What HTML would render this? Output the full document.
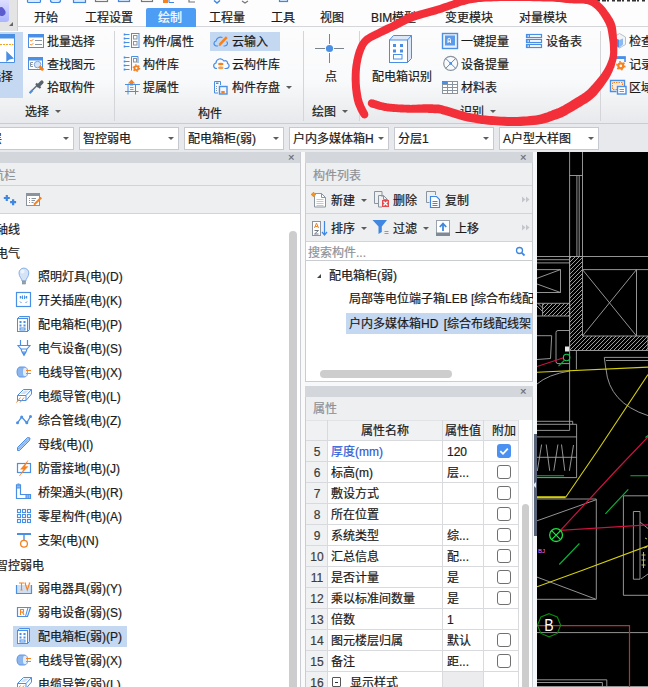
<!DOCTYPE html>
<html lang="zh-CN">
<head>
<meta charset="utf-8">
<title>UI</title>
<style>
*{box-sizing:border-box;margin:0;padding:0}
html,body{width:648px;height:687px;overflow:hidden}
body{position:relative;background:#e8e9ec;font-family:"Liberation Sans",sans-serif;font-size:12px;color:#1a1a1a;line-height:14px;-webkit-text-stroke:.2px}
.a{position:absolute}
.t{position:absolute;white-space:nowrap;height:14px;line-height:14px;margin-top:1px}
/* ribbon */
#ribbon{left:0;top:0;width:648px;height:124px;background:#f6f7f8}
#tabs{left:0;top:0;width:648px;height:27px;background:#fdfdfd}
#rbody{left:0;top:26px;width:648px;height:98px;background:linear-gradient(#fcfcfd 0,#f9fafb 55%,#e7e9ec 100%);border-top:1px solid #d4d6da;border-bottom:1px solid #c9ccd1}
.vsep{position:absolute;width:1px;top:31px;height:90px;background:#d3d5d9}
.tab{position:absolute;top:11px;font-size:12px;white-space:nowrap}
.hl{position:absolute;background:#c5d8f1}
.dd{position:absolute;top:127px;height:23px;background:#fff;border:1px solid #c6c9cf}
.dd span{position:absolute;left:3px;top:4px;white-space:nowrap}
.dd i{position:absolute;right:4px;top:9px;width:0;height:0;border:3px solid transparent;border-top:3.5px solid #5c5c5c;border-bottom:0}
.arr{position:absolute;width:0;height:0;border:3px solid transparent;border-top:3.5px solid #5c5c5c;border-bottom:0}
/* panels */
.phead{position:absolute;height:11px;background:#d3d6db}
.ptitle{position:absolute;height:23px;background:#eeeff1;border-bottom:1px solid #d2d4d8;color:#8e9196}
.ptool{position:absolute;height:28px;background:#eeeff1;border-bottom:1px solid #d2d4d8}
.x{position:absolute;font-size:11px;color:#666;line-height:11px}
.row{position:absolute;left:38px;white-space:nowrap;height:14px;line-height:14px}
.ico{position:absolute;left:16px;width:16px;height:16px}
.cb{position:absolute;left:497px;width:14px;height:14px;border:1px solid #707070;border-radius:3px;background:#fff}
.pr{position:absolute;left:306px;width:212px;height:21px;border-bottom:1px solid #d9dadd}
.pr b{position:absolute;left:0;top:0;width:22px;height:20px;background:#f0f1f3;font-weight:normal;text-align:center;line-height:22px;color:#3c3c3c}
.pr em{position:absolute;left:26px;top:5px;width:9px;height:10px;border:1px solid #555;border-radius:1px}
.pr em:after{content:"";position:absolute;left:2px;top:3.5px;width:3px;height:1px;background:#333}
.pr u{position:absolute;left:25px;top:4px;text-decoration:none;white-space:nowrap}
.pr s{position:absolute;left:141px;top:4px;text-decoration:none;white-space:nowrap}
</style>
</head>
<body>
<!-- RIBBON -->
<div id="ribbon" class="a">
 <div id="tabs" class="a"></div>
 <div id="rbody" class="a"></div>
</div>
<!-- app icon -->
<div class="a" style="left:0;top:0;width:18px;height:31px;background:#e4e4e5;border-right:1px solid #cfcfd1"></div>
<div class="a" style="left:0;top:0;width:9px;height:22px;background:linear-gradient(#dedeff,#aab4ff);border-radius:0 0 3px 0"></div>
<div class="a" style="left:-2px;top:7px;width:7px;height:9px;background:#5d5ccf;border-radius:4px;transform:rotate(-30deg)"></div>
<div class="a" style="left:9px;top:22px;width:0;height:0;border:2px solid transparent;border-right-color:#666;border-bottom-color:#666"></div>
<svg class="a" style="left:0;top:0" width="648" height="8" viewBox="0 0 648 8"><g fill="#dcebfb" stroke="#3f87e0" stroke-width="1.2">
<rect x="27.5" y="-3" width="13" height="5.5" rx="1"/><path d="M50.5 -2 V0.500 Q50.5 2.500 53 2.500 H58 Q60.5 2.500 60.5 0.500 V-2"/><rect x="73.500" y="-3" width="12" height="5.500"/>
<rect x="118.500" y="-3" width="11" height="4.500"/><rect x="279.500" y="-3" width="8" height="4.500"/></g>
<g fill="none" stroke="#777" stroke-width="1.2"><rect x="95.500" y="-3" width="12" height="4.500"/><rect x="141.500" y="-3" width="11" height="4.500"/><path d="M189 -1 V2 H195 M242 1 l3 2 l3 -2"/></g>
<rect x="163" y="0" width="5" height="3" fill="#f5821f"/><path d="M169 -1 V2.500 H174" stroke="#3f87e0" fill="none"/><path d="M214 0.500 l3 2.500 l3 -2.500" stroke="#3f87e0" fill="none" stroke-width="1.500"/>
<path d="M597 0.500 H646" stroke="#333" stroke-width="2" stroke-dasharray="3 2 4 1 2 3"/></svg>
<!-- tabs -->
<div class="a" style="left:146px;top:8px;width:50px;height:19px;background:#4d9df5;border-radius:2px 2px 0 0"></div>
<span class="tab" style="left:34px">开始</span>
<span class="tab" style="left:85px">工程设置</span>
<span class="tab" style="left:158px;color:#fff">绘制</span>
<span class="tab" style="left:209px">工程量</span>
<span class="tab" style="left:271px">工具</span>
<span class="tab" style="left:320px">视图</span>
<span class="tab" style="left:371px">BIM模型</span>
<span class="tab" style="left:445px">变更模块</span>
<span class="tab" style="left:519px">对量模块</span>

<!-- ribbon group 选择 -->
<div class="hl" style="left:0;top:32px;width:23px;height:66px"></div>
<span class="t" style="left:-11px;top:69px">选择</span>
<span class="t" style="left:47px;top:34px">批量选择</span>
<span class="t" style="left:47px;top:57px">查找图元</span>
<span class="t" style="left:47px;top:80px">拾取构件</span>
<span class="t" style="left:25px;top:104px">选择</span><i class="arr" style="left:55px;top:110px"></i>
<div class="vsep" style="left:114px"></div>
<!-- group 构件 -->
<span class="t" style="left:143px;top:34px">构件/属性</span>
<span class="t" style="left:143px;top:57px">构件库</span>
<span class="t" style="left:143px;top:80px">提属性</span>
<div class="hl" style="left:210px;top:32px;width:70px;height:19px"></div>
<span class="t" style="left:232px;top:34px">云输入</span>
<span class="t" style="left:232px;top:57px">云构件库</span>
<span class="t" style="left:232px;top:80px">构件存盘</span><i class="arr" style="left:286px;top:86px"></i>
<span class="t" style="left:198px;top:106px">构件</span>
<div class="vsep" style="left:303px"></div>
<!-- group 绘图 -->
<span class="t" style="left:325px;top:69px">点</span>
<span class="t" style="left:312px;top:104px">绘图</span><i class="arr" style="left:342px;top:110px"></i>
<div class="vsep" style="left:359px"></div>
<!-- group 识别 -->
<span class="t" style="left:372px;top:69px">配电箱识别</span>
<span class="t" style="left:461px;top:34px">一键提量</span>
<span class="t" style="left:461px;top:57px">设备提量</span>
<span class="t" style="left:461px;top:80px">材料表</span>
<span class="t" style="left:546px;top:34px">设备表</span>
<span class="t" style="left:460px;top:104px">识别</span><i class="arr" style="left:490px;top:110px"></i>
<div class="vsep" style="left:600px"></div>
<span class="t" style="left:629px;top:34px">检查</span>
<span class="t" style="left:629px;top:57px">记录</span>
<span class="t" style="left:629px;top:80px">区域</span>


<!-- ribbon icons -->
<svg class="a" style="left:0;top:0" width="648" height="125" viewBox="0 0 648 125">
<g fill="none" stroke-width="1">
<!-- select big -->
<rect x="-2" y="34" width="17" height="28.5" fill="#fff" stroke="none"/>
<rect x="-2" y="34" width="17" height="4.5" fill="#4a8fe6" stroke="none"/>
<path d="M14.5 38 V62.5 H-1" stroke="#4a8fe6"/>
<path d="M0 44.5 H13.5" stroke="#f5a21f" stroke-dasharray="2 1"/>
<path d="M6.3 51 L14 58.4 L9.5 59.6 L6.3 62 Z" fill="#4a8fe6" stroke="none"/>
<!-- batch select -->
<rect x="28.5" y="34.5" width="15" height="13" fill="#fff" stroke="#4a8fe6"/>
<rect x="28" y="34" width="16" height="3.5" fill="#4a8fe6" stroke="none"/>
<path d="M30.3 40 l1 1.2 l2 -2 M30.3 44 l1 1.2 l2 -2" stroke="#f5821f"/>
<path d="M35 40.5 H42 M35 44.5 H42" stroke="#8a949e"/>
<!-- find -->
<rect x="28.5" y="57.5" width="14" height="12" fill="#fff" stroke="#4a8fe6"/>
<rect x="28" y="57" width="15" height="3.5" fill="#4a8fe6" stroke="none"/>
<path d="M33 62.5 H30.5 V66.5 H33 M30.5 64.5 H32.5" stroke="#8a949e"/>
<circle cx="37.6" cy="64.6" r="3.3" fill="#d6e4f7" stroke="#7da2e0"/>
<path d="M40.3 67.2 L42.3 69.2" stroke="#f5821f" stroke-width="3" stroke-linecap="round"/>
<!-- eyedropper -->
<path d="M30 92.5 L37.5 85" stroke="#68727c" stroke-width="1.6"/>
<path d="M29.6 93.2 L32.5 90.2" stroke="#4a8fe6" stroke-width="2"/>
<path d="M36 83.5 L40.5 88" stroke="#59636d" stroke-width="2.2"/>
<path d="M38.3 85.7 L41.8 82.2" stroke="#59636d" stroke-width="3.6" stroke-linecap="round"/>
<!-- component/attr -->
<g stroke="#4a8fe6">
<path d="M125 34.5 H129.5 M125 38.5 H129.5 M125 42.5 H129.5 M125 46.5 H129.5"/>
<path d="M124.5 33.5 v2 M124.5 37.5 v2 M124.5 41.5 v2 M124.5 45.5 v2" stroke-width="1.6"/>
<rect x="131.5" y="33.5" width="7.5" height="14"/>
<path d="M125 57.5 H129.5 M125 61.5 H129.5 M125 65.5 H129.5 M125 69.5 H129.5"/>
<path d="M124.5 56.5 v2 M124.5 60.5 v2 M124.5 64.5 v2 M124.5 68.5 v2" stroke-width="1.6"/>
<path d="M131.5 70.5 V56.5 H138 V63"/>
</g>
<rect x="133.5" y="35.5" width="3.5" height="3.5" stroke="#8a949e"/>
<rect x="133.5" y="41.5" width="3.5" height="3.5" stroke="#8a949e"/>
<rect x="133.5" y="58.5" width="3" height="3.5" stroke="#8a949e"/>
<circle cx="136.4" cy="68.1" r="2" stroke="#f5821f" stroke-width="1.9"/>
<circle cx="136.4" cy="68.1" r="3.2" stroke="#f5821f" stroke-width="1.4" stroke-dasharray="1.4 1.95"/>
<!-- extract attr -->
<path d="M131.5 79.5 L135.2 83.5 H133 V85.5 H130 V83.5 H127.8 Z" fill="#f5821f" stroke="none"/>
<path d="M128 84 V94.5 M135.5 84 V94.5 M125 84.5 H140 M125 91.5 H138.5" stroke="#4a8fe6"/>
<path d="M130 87.5 H133.5 M130 89.5 H133.5" stroke="#f5821f"/>
<!-- cloud input -->
<path d="M222.5 37.5 C219.5 36.5 216.5 38 216 41 C213.5 41.5 213 45.5 216.5 46 H218 M223.5 46 H225 C228 45.5 228 42.5 226.5 41.5" stroke="#4a8fe6" stroke-width="1.2"/>
<path d="M219.5 44.8 L226.8 37.2" stroke="#f5821f" stroke-width="2.6"/>
<path d="M218.6 46 L220.5 45.4 L219.2 44.2 Z" fill="#f5821f" stroke="none"/>
<!-- cloud lib -->
<path d="M217 68.5 C213 68.5 212.5 64 216 63 C216 59 221.5 57 224 61 C226 60 228 62 227.5 63.5 C230 64.5 229.5 68.5 226 68.5 H224.5" stroke="#4a8fe6" stroke-width="1.2"/>
<ellipse cx="220.8" cy="64" rx="2.8" ry="1.3" fill="#f5821f" stroke="none"/>
<ellipse cx="220.8" cy="67.8" rx="2.8" ry="1.5" fill="#f5a04f" stroke="none"/>
<!-- save -->
<path d="M220.5 85 V81.5 H214.5 V93 H218" stroke="#4a8fe6"/>
<rect x="216" y="82.5" width="2.5" height="1.5" fill="#4a8fe6" stroke="none"/>
<path d="M216.5 86 v1 M216.5 88 v1 M216.5 90 v1" stroke="#8a949e"/>
<rect x="219.5" y="86.5" width="7.5" height="7.5" stroke="#4a8fe6" stroke-width="1.4"/>
<rect x="221.3" y="91" width="3.4" height="2.6" fill="#f5821f" stroke="none"/>
<!-- point -->
<path d="M315 48.5 H325 M334 48.5 H344 M329.5 34 V44 M329.5 53 V63" stroke="#7a848f"/>
<circle cx="329.5" cy="48.5" r="3.6" fill="#4a8fe6" stroke="none"/>
<!-- box recognise -->
<path d="M389.5 40 L393.5 35.5 H411.5 V58.5 L407.5 62.5" fill="#dce8f8" stroke="#4a8fe6"/>
<rect x="389.5" y="40" width="18" height="22.5" fill="#fff" stroke="#4a8fe6"/>
<path d="M407.5 40 L411.5 35.5" stroke="#4a8fe6"/>
<g fill="#4a8fe6" stroke="none"><rect x="393" y="44" width="3" height="3"/><rect x="400" y="44" width="3" height="3"/><rect x="393" y="49.5" width="3" height="3"/><rect x="400" y="49.5" width="3" height="3"/></g>
<rect x="393.5" y="54.5" width="8.5" height="4.5" stroke="#4a8fe6"/>
<!-- one key -->
<rect x="442.5" y="33.5" width="15" height="15" fill="#eaf2fc" stroke="#4a8fe6" stroke-width="1.4"/>
<rect x="445" y="35.5" width="10" height="10" fill="#5b9bea" stroke="none"/>
<path d="M448 43 V39.5 Q448 38.300 449.200 38.300 Q450.400 38.300 450.400 39.5 V43 M448 41.300 H450.4" stroke="#fff"/>
<!-- device qty -->
<circle cx="450.7" cy="63.4" r="7" stroke="#8a949e" stroke-width="1.2"/>
<path d="M445.800 58.5 L455.600 68.300 M455.600 58.5 L445.800 68.3" stroke="#4a8fe6"/>
<rect x="449.4" y="62.1" width="2.6" height="2.6" fill="#4a8fe6" stroke="none"/>
<!-- material table -->
<rect x="442.5" y="81.5" width="15" height="12" fill="#fff" stroke="#8a949e"/>
<path d="M442.5 84.5 H457.5 M442.5 87.5 H457.5 M442.5 90.5 H457.5 M447.5 81.5 V93.5 M452.5 81.5 V93.5" stroke="#8a949e"/>
<rect x="442" y="81" width="5.5" height="3" fill="#4a8fe6" stroke="none"/>
<!-- device table -->
<g stroke="#4a8fe6" fill="#fff" stroke-width="1.2"><rect x="526.5" y="34.5" width="15" height="3"/><rect x="526.5" y="39.5" width="15" height="3"/><rect x="526.5" y="44.5" width="15" height="3"/></g>
<g fill="#4a8fe6" stroke="none"><rect x="526" y="34" width="4" height="4"/><rect x="526" y="39" width="4" height="4"/><rect x="526" y="44" width="4" height="4"/></g>
<g fill="#dce8f8" stroke="none"><rect x="527.5" y="35.3" width="1.5" height="1.5"/><rect x="527.5" y="40.3" width="1.5" height="1.5"/><rect x="527.5" y="45.3" width="1.5" height="1.5"/></g>
<!-- check cube -->
<path d="M619.5 33.5 L625.5 37 V44.5 L619.5 48 L613.5 44.5 V37 Z" fill="#f1f3f5" stroke="#b9c0c8"/>
<path d="M613 37 L619.5 40 V47.5 L613 45 Z" fill="#4a8fe6" stroke="none"/>
<path d="M619.5 40 L623 38.5 V44.5 L619.5 47.500Z" fill="#8bb8f0" stroke="none"/>
<!-- record -->
<path d="M613.5 68 V57 H625 V62" stroke="#4a8fe6" stroke-width="1.6"/>
<rect x="613" y="56.5" width="12.5" height="2.5" fill="#4a8fe6" stroke="none"/>
<circle cx="620.8" cy="65.8" r="2.5" stroke="#f5821f" stroke-width="2.2"/>
<circle cx="620.8" cy="65.8" r="4" stroke="#f5821f" stroke-width="1.6" stroke-dasharray="1.6 2.59"/>
<!-- region -->
<path d="M616.5 91.5 H610.5 V80.5 H624.5 V86" stroke="#4a8fe6" stroke-width="1.4"/>
<path d="M617 89.5 H612.5 V82.5 H622.5 V86" stroke="#f5821f" stroke-dasharray="1.5 1" fill="#fde9d7"/>
<rect x="617.5" y="86.5" width="8.5" height="7.5" fill="#fff" stroke="#4a8fe6" stroke-width="1.4"/>
<path d="M619.5 89.5 H624 M619.5 91.5 H624" stroke="#8a949e"/>
</g>
</svg>

<!-- dropdown bar -->
<div class="dd" style="left:-30px;width:104px"><span style="left:7px">首层</span><i></i></div>
<div class="dd" style="left:79px;width:100px"><span>智控弱电</span><i></i></div>
<div class="dd" style="left:184px;width:100px"><span>配电箱柜(弱)</span><i></i></div>
<div class="dd" style="left:289px;width:100px"><span>户内多媒体箱H</span><i></i></div>
<div class="dd" style="left:394px;width:100px"><span>分层1</span><i></i></div>
<div class="dd" style="left:499px;width:100px"><span>A户型大样图</span><i></i></div>

<!-- LEFT PANEL -->
<div class="a" style="left:0;top:152px;width:300px;height:535px;background:#fff"></div>
<div class="phead" style="left:0;top:152px;width:300px"></div>
<span class="x" style="left:288px;top:152px">×</span>
<div class="ptitle" style="left:0;top:163px;width:300px"><span class="t" style="left:-8px;top:5px">航栏</span></div>
<div class="ptool" style="left:0;top:186px;width:300px"></div>
<div class="a" style="left:289px;top:231px;width:8px;height:470px;background:#cdcdcd;border-radius:4px"></div>
<span class="t" style="left:-4px;top:222px">轴线</span>
<span class="t" style="left:-4px;top:246px">电气</span>
<span class="row" style="top:270px">照明灯具(电)(D)</span>
<span class="row" style="top:294px">开关插座(电)(K)</span>
<span class="row" style="top:318px">配电箱柜(电)(P)</span>
<span class="row" style="top:342px">电气设备(电)(S)</span>
<span class="row" style="top:366px">电线导管(电)(X)</span>
<span class="row" style="top:390px">电缆导管(电)(L)</span>
<span class="row" style="top:414px">综合管线(电)(Z)</span>
<span class="row" style="top:438px">母线(电)(I)</span>
<span class="row" style="top:462px">防雷接地(电)(J)</span>
<span class="row" style="top:486px">桥架通头(电)(R)</span>
<span class="row" style="top:510px">零星构件(电)(A)</span>
<span class="row" style="top:534px">支架(电)(N)</span>
<span class="t" style="left:-4px;top:558px">智控弱电</span>
<span class="row" style="top:582px">弱电器具(弱)(Y)</span>
<span class="row" style="top:606px">弱电设备(弱)(S)</span>
<div class="hl" style="left:13px;top:626px;width:114px;height:21px"></div>
<span class="row" style="top:630px">配电箱柜(弱)(P)</span>
<span class="row" style="top:654px">电线导管(弱)(X)</span>
<span class="row" style="top:678px">电缆导管(弱)(L)</span>


<!-- left panel icons -->
<svg class="a" style="left:0;top:186px" width="300" height="501" viewBox="0 186 300 501">
<g fill="none" stroke-width="1">
<path d="M3.8 198 H9.8 M6.8 195 V201 M10.1 202.2 H16.1 M13.1 199.2 V205.2" stroke="#3f87e0" stroke-width="2.2"/>
<rect x="26.5" y="193.5" width="13" height="12" fill="#fff" stroke="#8a949e"/>
<rect x="26" y="193" width="14" height="3" fill="#8a949e" stroke="none"/>
<path d="M29 198.5 h1 M31.5 198.5 H36 M29 200.5 h1 M31.5 200.5 H35 M29 202.5 h1 M31.5 202.5 H33.5" stroke="#8a949e"/>
<path d="M34 204.8 L41.3 197.5" stroke="#f5821f" stroke-width="2"/>
<!-- bulb -->
<path d="M22 281 C22 278.5 19 277 19 273 A4.9 4.9 0 0 1 28.8 273 C28.8 277 25.8 278.5 25.8 281 Z" fill="#d4e3f6" stroke="#86aee8"/>
<circle cx="22.5" cy="271.5" r="2" fill="#eef4fc" stroke="none"/>
<rect x="22.3" y="281" width="3.2" height="3" fill="#9aa3ad" stroke="#7f8890" stroke-width=".6"/>
<!-- socket -->
<rect x="16.5" y="292.5" width="14" height="14" fill="#fff" stroke="#4a8fe6" stroke-width="1.2"/>
<path d="M22.5 295.5 V299 M24.5 295.5 V299 M20 297.3 h1.5 M25.5 297.3 h1.5 M20 301.5 l1.5 1.5 M27 301.5 l-1.5 1.5" stroke="#4a8fe6"/>
<path d="M20.5 296 V298.5 M26.5 296 V298.5" stroke="#4a8fe6" stroke-width="1.4"/>
<path d="M17.5 318.5 L19.5 316.5 H29.5 V329.5 L27.5 331.5" fill="#dce8f8" stroke="#4a8fe6"/>
<rect x="17.5" y="318.5" width="10" height="13" fill="#fff" stroke="#4a8fe6"/>
<g fill="#4a8fe6" stroke="none"><rect x="19.5" y="321" width="2" height="2"/><rect x="23.5" y="321" width="2" height="2"/><rect x="19.5" y="324.5" width="2" height="2"/><rect x="23.5" y="324.5" width="2" height="2"/></g>
<rect x="20" y="328" width="5" height="2" stroke="#4a8fe6"/>
<!-- plug -->
<path d="M20.5 340 V345.5 M27.5 340 V345.5" stroke="#4a8fe6" stroke-width="1.2"/>
<path d="M18 345.5 H30 L27 349 H21 Z M21 349 L22 352 H26 L27 349 M22 352 L24 355.5 L26 352" fill="#fff" stroke="#4a8fe6" stroke-width="1.1"/>
<path d="M22.5 352.5 H25.5 L24 355.500Z" fill="#4a8fe6" stroke="none"/>
<path d="M20 367 H24.5 A3 5 0 0 1 24.5 377 H20 A3 5 0 0 1 20 367Z" fill="#8db5ee" stroke="#5c97e6"/>
<ellipse cx="25" cy="372" rx="2.6" ry="4.6" fill="#e3edfa" stroke="#7aa9ea" stroke-width=".8"/>
<path d="M26 370.5 H31 M26 373.5 H31" stroke="#f5821f"/>
<path d="M17.5 395.5 L23.5 389.5 H31.5 L31.5 394 L26 400.5 H17.5 Z" fill="#fff" stroke="#4a8fe6"/>
<path d="M17.5 395.5 H26 L31.5 389.5 M26 395.5 V400.5" stroke="#4a8fe6"/>
<path d="M20.5 394 L24.5 390.5 H29 L25 394Z" fill="#cfe0f6" stroke="none"/>
<path d="M16.5 402.5 L20.5 397.5 M20 402.5 L24 397.5" stroke="#f5821f"/>
<!-- zigzag -->
<path d="M17.5 422.8 L21.7 417 L26.8 422.8 L30.5 416.5" stroke="#4a8fe6" stroke-width="1.3"/>
<g fill="#4a8fe6" stroke="none"><circle cx="17.5" cy="422.8" r="1.5"/><circle cx="21.7" cy="417" r="1.5"/><circle cx="26.8" cy="422.8" r="1.5"/><circle cx="30.5" cy="416.5" r="1.5"/></g>
<!-- busbar -->
<path d="M17.5 447.5 L27.5 437.5 L30 438 L29.5 440.5 L19.5 450.5 L17.5 450.5 Z" fill="#a9c8f2" stroke="#4a8fe6"/>
<path d="M18.5 449 L28.5 439" stroke="#4a8fe6" stroke-dasharray="1 1"/>
<!-- lightning -->
<rect x="17.5" y="463.5" width="13" height="9" fill="#fff" stroke="#4a8fe6" stroke-width="1.2"/>
<path d="M28 460.5 L20.5 469.3 L23.8 469.3 L19.3 476 L28 466.6 L24.8 466.6 Z" fill="#f5821f" stroke="#f5821f" stroke-width=".4"/>
<!-- elbow -->
<path d="M16.5 485 H20.5 V494.5 H30.5 V498.5 H16.5 Z" fill="#fff" stroke="#4a8fe6" stroke-width="1.2"/>
<rect x="16.5" y="485" width="4" height="3" fill="#8db5ee" stroke="#4a8fe6"/>
<rect x="26" y="494.5" width="3" height="4" fill="#8db5ee" stroke="#4a8fe6"/>
<path d="M17.5 484 h2" stroke="#4a8fe6"/>
<!-- grid -->
<g stroke="#4a8fe6" stroke-width="1.1"><rect x="17.5" y="509.5" width="3" height="3"/><rect x="22.5" y="509.5" width="3" height="3"/><rect x="27.5" y="509.5" width="3" height="3"/><rect x="17.5" y="514.5" width="3" height="3"/><rect x="22.5" y="514.5" width="3" height="3"/><rect x="27.5" y="514.5" width="3" height="3"/><rect x="17.5" y="519.5" width="3" height="3"/><rect x="22.5" y="519.5" width="3" height="3"/><rect x="27.5" y="519.5" width="3" height="3"/></g>
<!-- support -->
<path d="M17 534 H31" stroke="#4a8fe6" stroke-width="2"/>
<path d="M24 534 V540" stroke="#4a8fe6" stroke-width="1.4"/>
<circle cx="24" cy="543.8" r="3.4" stroke="#f5821f" stroke-width="1.3"/>
<!-- TV -->
<path d="M16.5 585 V593.5 H31.5 V585" fill="#cfe0f6" stroke="#4a8fe6" stroke-width="1.2"/>
<path d="M19 583 H24 M21.5 583 V590 M20.5 590 h2 M25 583 L27.3 590 L29.6 583 M24.5 583 h1.5 M28.8 583 h1.5" stroke="#f5821f" stroke-width="1.1"/>
<!-- R -->
<path d="M17.5 607.5 H30.5 L27.5 616.5 H17.5 Z" fill="#fff" stroke="#4a8fe6" stroke-width="1.2"/>
<path d="M28 607.5 L25.5 616.5" stroke="#4a8fe6"/>
<path d="M20.5 615 V609.5 H23.5 V612 H20.5 M22.5 612 L24 615" stroke="#f5821f" stroke-width="1.1"/>
<path d="M17.5 630.5 L19.5 628.5 H29.5 V641.5 L27.5 643.5" fill="#dce8f8" stroke="#4a8fe6"/>
<rect x="17.5" y="630.5" width="10" height="13" fill="#fff" stroke="#4a8fe6"/>
<g fill="#4a8fe6" stroke="none"><rect x="19.5" y="633" width="2" height="2"/><rect x="23.5" y="633" width="2" height="2"/><rect x="19.5" y="636.5" width="2" height="2"/><rect x="23.5" y="636.5" width="2" height="2"/></g>
<rect x="20" y="640" width="5" height="2" stroke="#4a8fe6"/>
<path d="M20 655 H24.5 A3 5 0 0 1 24.5 665 H20 A3 5 0 0 1 20 655Z" fill="#8db5ee" stroke="#5c97e6"/>
<ellipse cx="25" cy="660" rx="2.6" ry="4.6" fill="#e3edfa" stroke="#7aa9ea" stroke-width=".8"/>
<path d="M26 658.5 H31 M26 661.5 H31" stroke="#f5821f"/>
<path d="M17.5 683.5 L23.5 677.5 H31.5 L31.5 682 L26 688.5 H17.5 Z" fill="#fff" stroke="#4a8fe6"/>
<path d="M17.5 683.5 H26 L31.5 677.5 M26 683.5 V688.5" stroke="#4a8fe6"/>
<path d="M20.5 682 L24.5 678.5 H29 L25 682Z" fill="#cfe0f6" stroke="none"/>
<path d="M16.5 690.5 L20.5 685.5 M20 690.5 L24 685.5" stroke="#f5821f"/>
</g>
</svg>

<!-- gap -->
<div class="a" style="left:300px;top:152px;width:5px;height:535px;background:#fafafb;border-left:1px solid #c9ccd1"></div>

<!-- MIDDLE PANEL: list -->
<div class="a" style="left:305px;top:152px;width:228px;height:230px;background:#fff;border:1px solid #c9ccd1;border-top:0"></div>
<div class="phead" style="left:305px;top:152px;width:228px"></div>
<span class="x" style="left:520px;top:152px">×</span>
<div class="ptitle" style="left:306px;top:163px;width:226px"><span class="t" style="left:7px;top:5px">构件列表</span></div>
<div class="ptool" style="left:306px;top:186px;width:226px"></div>
<div class="ptool" style="left:306px;top:214px;width:226px"></div>
<span class="t" style="left:331px;top:193px">新建</span><i class="arr" style="left:361px;top:199px"></i>
<span class="t" style="left:393px;top:193px">删除</span>
<span class="t" style="left:445px;top:193px">复制</span>
<span class="t" style="left:331px;top:221px">排序</span><i class="arr" style="left:361px;top:227px"></i>
<span class="t" style="left:393px;top:221px">过滤</span><i class="arr" style="left:423px;top:227px"></i>
<span class="t" style="left:455px;top:221px">上移</span>
<div class="a" style="left:306px;top:242px;width:226px;height:19px;border-bottom:1px solid #c9ccd1;background:#fff"></div>
<span class="t" style="left:308px;top:245px;color:#8f9297">搜索构件...</span>
<div class="a" style="left:317px;top:274px;width:0;height:0;border:2.5px solid transparent;border-right-color:#444;border-bottom-color:#444"></div>
<span class="t" style="left:329px;top:268px">配电箱柜(弱)</span>
<span class="t" style="left:349px;top:291px">局部等电位端子箱LEB [综合布线配</span>
<div class="hl" style="left:346px;top:313px;width:186px;height:21px"></div>
<span class="t" style="left:349px;top:316px">户内多媒体箱HD<span style="margin-left:2px"> </span>[综合布线配线架</span>
<div class="a" style="left:320px;top:370px;width:132px;height:8px;border-radius:4px;background:#cdcdcd"></div>
<div class="a" style="left:305px;top:382px;width:228px;height:4px;background:#f7f8f9"></div>

<!-- middle toolbar icons -->
<svg class="a" style="left:305px;top:186px" width="228" height="76" viewBox="305 186 228 76">
<g fill="none" stroke-width="1">
<!-- new -->
<path d="M314.5 193.5 H321.5 L325.5 197.5 V207 H314.5 Z" fill="#fff" stroke="#8a949e"/>
<path d="M321.5 193.5 V197.5 H325.5" stroke="#8a949e"/>
<path d="M316.5 199.5 H323.5 M316.5 201.5 H323.5 M316.5 203.5 H323.5 M316.5 205.5 H323.5" stroke="#c3c8ce"/>
<path d="M311 194.5 H316 M313.5 192 V197 M311.8 192.8 L315.2 196.2 M315.2 192.8 L311.8 196.2" stroke="#f5921f" stroke-width="1.1"/>
<!-- delete -->
<path d="M382 197 V191.5 H374.5 V203.5 H378" stroke="#8a949e"/>
<path d="M378.5 195.5 H383.5 L387.5 199.5 V200 M378.5 195.5 V207 H382" stroke="#8a949e"/>
<path d="M383.5 195.5 V199.5 H387.5" stroke="#8a949e"/>
<rect x="382" y="200" width="7" height="7" fill="#e5484d" stroke="none"/>
<path d="M383.5 201.5 L387.5 205.5 M387.5 201.5 L383.5 205.5" stroke="#fff" stroke-width="1.2"/>
<!-- copy -->
<path d="M435.5 195 V191.5 H426.5 V202.5 H429.5" stroke="#8a949e"/>
<path d="M430.5 196.5 H436.5 L439.5 199.5 V207.5 H430.5 Z" fill="#fff" stroke="#3f87e0" stroke-width="1.2"/>
<path d="M432.5 201.5 H437.5 M432.5 203.5 H437.5 M432.5 205.5 H437.5" stroke="#3f87e0"/>
<!-- chevrons -->
<g fill="#c3c6cb" stroke="none"><path d="M522 196.5 L525.5 199.5 L522 202.500Z M526 196.5 L529.5 199.5 L526 202.500Z M522 224.5 L525.5 227.5 L522 230.500Z M526 224.5 L529.5 227.5 L526 230.500Z"/></g>
<!-- sort -->
<rect x="312.5" y="221.5" width="8" height="14" fill="#fff" stroke="#8a949e"/>
<path d="M314.5 228 L316.5 223 L318.5 228 M315.2 226.5 H317.8" stroke="#f5821f"/>
<path d="M314.5 230.5 H318.5 L314.5 234 H318.5" stroke="#6f7984"/>
<path d="M324.5 221 V235 M322 232 L324.5 235 L327 232" stroke="#3f87e0" stroke-width="1.2"/>
<!-- filter -->
<path d="M372.5 220 H387 L381.8 226.5 V232 L378.5 234 V226.5 Z" fill="#3f87e0" stroke="none"/>
<path d="M384.5 231.5 H388.5 M384.5 233.5 H388.5" stroke="#f5821f"/>
<!-- up -->
<rect x="436.5" y="220.5" width="13" height="15" fill="#fff" stroke="#9aa3ad"/>
<rect x="436" y="232.5" width="14" height="3.5" fill="#7f8a96" stroke="none"/>
<path d="M443 231 V224 M439.8 227 L443 223.5 L446.2 227" stroke="#3f87e0" stroke-width="1.8"/>
<!-- search -->
<circle cx="519.5" cy="250.5" r="3" stroke="#3f87e0" stroke-width="1.3"/>
<path d="M521.8 252.8 L524.5 255.5" stroke="#3f87e0" stroke-width="1.8"/>
</g>
</svg>

<!-- MIDDLE PANEL: props -->
<div class="a" style="left:305px;top:386px;width:228px;height:301px;background:#fff;border:1px solid #c9ccd1;border-top:0;border-bottom:0"></div>
<div class="phead" style="left:305px;top:386px;width:228px"></div>
<span class="x" style="left:520px;top:386px">×</span>
<div class="ptitle" style="left:306px;top:397px;width:226px;height:23px;border-bottom:0"><span class="t" style="left:7px;top:4px">属性</span></div>
<div class="a" style="left:306px;top:420px;width:212px;height:21px;background:#f0f1f3;border-bottom:1px solid #d9dadd;border-top:1px solid #e2e3e6"></div>
<span class="t" style="left:361px;top:423px">属性名称</span>
<span class="t" style="left:445px;top:423px">属性值</span>
<span class="t" style="left:492px;top:423px">附加</span>
<div class="pr" style="top:441px"><b>5</b><u style="color:#2a5bd7">厚度(mm)</u><s>120</s></div>
<div class="pr" style="top:462px"><b>6</b><u>标高(m)</u><s>层...</s></div>
<div class="pr" style="top:483px"><b>7</b><u>敷设方式</u></div>
<div class="pr" style="top:504px"><b>8</b><u>所在位置</u></div>
<div class="pr" style="top:525px"><b>9</b><u>系统类型</u><s>综...</s></div>
<div class="pr" style="top:546px"><b>10</b><u>汇总信息</u><s>配...</s></div>
<div class="pr" style="top:567px"><b>11</b><u>是否计量</u><s>是</s></div>
<div class="pr" style="top:588px"><b>12</b><u>乘以标准间数量</u><s>是</s></div>
<div class="pr" style="top:609px"><b>13</b><u>倍数</u><s>1</s></div>
<div class="pr" style="top:630px"><b>14</b><u>图元楼层归属</u><s>默认</s></div>
<div class="pr" style="top:651px"><b>15</b><u>备注</u><s>距...</s></div>
<div class="pr" style="top:672px"><b>16</b><u style="left:44px">显示样式</u><em></em></div>
<div class="a" style="left:483px;top:672px;width:35px;height:15px;background:#fff"></div><div class="a" style="left:443px;top:672px;width:40px;height:15px;background:#ececee"></div>
<div class="a" style="left:327px;top:420px;width:1px;height:267px;background:#d9dadd"></div>
<div class="a" style="left:442px;top:420px;width:1px;height:267px;background:#d9dadd"></div>
<div class="a" style="left:483px;top:420px;width:1px;height:267px;background:#d9dadd"></div>
<div class="a" style="left:518px;top:420px;width:1px;height:267px;background:#d9dadd"></div>
<div class="a" style="left:497px;top:444px;width:14px;height:14px;background:#4a91f2;border-radius:3px"></div>
<svg class="a" style="left:497px;top:444px" width="14" height="14"><path d="M3.3 7.2 L6 9.8 L10.8 4.6" fill="none" stroke="#fff" stroke-width="1.8"/></svg>
<div class="cb" style="top:465px"></div>
<div class="cb" style="top:486px"></div>
<div class="cb" style="top:507px"></div>
<div class="cb" style="top:528px"></div>
<div class="cb" style="top:549px"></div>
<div class="cb" style="top:570px"></div>
<div class="cb" style="top:591px"></div>
<div class="cb" style="top:633px"></div>
<div class="cb" style="top:654px"></div>
<div class="a" style="left:522px;top:504px;width:7px;height:190px;border-radius:4px;background:#cdcdcd"></div>

<!-- gap -->
<div class="a" style="left:533px;top:152px;width:4px;height:535px;background:#f7f8f9"></div>

<!-- CAD -->
<svg class="a" style="left:537px;top:152px" width="111" height="535" viewBox="537 152 111 535">
<defs><pattern id="h" width="4" height="4" patternUnits="userSpaceOnUse"><path d="M-1 1 L1 -1 M0 4 L4 0 M3 5 L5 3" stroke="#b9b9b9" stroke-width=".85"/></pattern></defs>
<rect x="537" y="152" width="111" height="535" fill="#000"/>
<g fill="none" stroke="#a4a4a4" stroke-width=".9">
<!-- top column -->
<path d="M569.6 152 V430.4 M582.5 152 V256.5 M569.6 175.5 H582.5 M576.9 175.5 V256.5 M579.2 175.5 V256.5"/>
<path d="M537 256.5 H648 M537 259.7 H569.6 M537 262.9 H569.6"/>
<!-- hatch walls -->
<path d="M569.6 256.5 H582.5 V336 H648 V350.5 H569.6 Z" fill="url(#h)"/>
<path d="M542.6 303.3 H569.6 V316 H542.6 Z" fill="url(#h)"/>
<path d="M537 303.3 H542.6 M537 316 H542.6 M537 306 L542 311 M538 303.5 L542.6 308"/>
<!-- left triangle box -->
<path d="M537 269.6 H560.5 V292.5 H537 M560.5 269.6 L537 278.3 M537 284 L560.5 292.5"/>
<!-- X box -->
<path d="M582.5 269.6 H648 M636.5 269.6 V336 M582.5 269.6 L636.5 336 M636.5 269.6 L582.5 336"/>
<!-- lower left shapes -->
<path d="M569.6 330.5 H558 Q556 330.5 556 332.5 V361.5 Q556 363.6 558 363.6 H569.6"/>
<path d="M537 335.7 H551.7 L550.5 358.5 L537 359.5"/>
<path d="M576.4 350.5 V369.3 M576.6 424.3 V477.6"/>
<!-- door -->
<path d="M648 357.4 H604.3 L606 370 M606 360.5 H648"/>
<path d="M606 369 Q609 403 648 415.6"/>
<path d="M537 384 Q548 374.5 569.6 371"/>
<!-- stairs -->
<path d="M537 421.3 H572.7 V424.3 M537 424.3 H576.6 M537 430.4 H569.6 M537 436.9 H576.6 M537 457.3 H576.6 M537 477.6 H576.6"/>
<path d="M541.6 444.5 L537.3 471 M546.2 444.5 L549.7 470.8 M557.9 444.5 L553.8 470.8 M561.5 444.5 L564.8 470.8 M573.5 445 L569.4 470.8" stroke-width=".9"/>
<!-- mid rect -->
<path d="M537 499 H596.3 V599.3 H537 M537 520.8 L596 499.8 M537 577.1 L595.4 599"/>
<path d="M648 495.8 H623.4 V595.3 H648 M633.4 579.2 V511.5 H640 V579.2 Z M640 522 L648 528.5 M641 579 L648 574"/>
<!-- bottom -->
<path d="M537 632.6 H648 M537 679.8 H606.8 V687 M537 682.5 H602.4 V687 M537 686.5 H648"/>
</g>
<!-- colored -->
<g fill="none" stroke-width="1.1">
<path d="M537 372.3 L648 367.1 M648 374.5 L598 450 L565.7 497.2 M648 545.8 L583.2 570 L537 586.8" stroke="#d4cf0c"/>
<path d="M537 497.2 H565.7" stroke="#d4cf0c" stroke-width="2"/>
<path d="M537 366.5 L563.6 357.7 M648 436.8 L616.4 470 L560.5 530.4 L648 524.8" stroke="#cf1340" stroke-width="1.15"/>
<circle cx="566.6" cy="357.5" r="3.2" stroke="#10d048" stroke-width="1.1"/>
<path d="M564.6 360.2 L558.5 366.2 M537 475.7 H564 M630.4 475.7 H648 M628.3 489.3 L605.4 513.8 M579.4 543.5 L559.3 564.5 M645.5 437.5 L648 435.5" stroke="#0cb03c" stroke-width="1.15"/>
<circle cx="556.1" cy="535.1" r="6.4" stroke="#20e040" stroke-width="1.3"/>
<path d="M551.6 530.6 L560.6 539.6 M560.6 530.6 L551.6 539.6" stroke="#20e040" stroke-width="1.3"/>
<path d="M549.1 613.7 L557.3 617 L560.7 625.2 L557.3 633.4 L549.1 636.8 L540.9 633.4 L537.5 625.2 L540.9 617 Z" stroke="#0a8a0a" stroke-width="1.1"/>
<path d="M537 625.6 H629.5 V687" stroke="#b23535" stroke-width="1.2"/>
<path d="M643.5 552 V568 M641.5 555 h4 M641.5 560 h4 M641.5 565 h4 M645 538 l2 1 M644 548 l3 -1" stroke="#c8c86a" stroke-width=".9"/>
</g>
<rect x="565" y="346.5" width="4" height="5" fill="#e8e8e8"/>
<text x="0" y="0" transform="translate(544.3 630.8) scale(.84 1)" font-family="Liberation Sans, sans-serif" font-size="16.8" fill="#fff">B</text>
<text x="538" y="553" font-family="Liberation Sans, sans-serif" font-size="6" fill="#ff6cf0">BJ</text>
</svg>

<div class="a" style="left:534px;top:434px;width:3px;height:102px;background:#5a6479"></div>
<div class="a" style="left:533px;top:482px;width:0;height:0;border:3px solid transparent;border-right-color:#e8eaee;border-left:0"></div>
<!-- red annotation -->
<svg class="a" style="left:0;top:0" width="648" height="140" viewBox="0 0 648 140"><g fill="#f3303a">
<path d="M370.6 107.2 L371.2 107.4 L372.1 107.7 L373.1 108.0 L374.2 108.3 L375.5 108.7 L376.7 109.0 L377.9 109.4 L379.0 109.7 L379.9 109.9 L380.8 110.1 L381.7 110.3 L382.6 110.5 L383.5 110.7 L384.5 110.9 L385.5 111.0 L386.7 111.2 L387.9 111.4 L389.2 111.5 L390.5 111.7 L391.9 111.8 L393.3 111.9 L394.8 112.0 L396.3 112.1 L397.7 112.2 L399.3 112.3 L400.8 112.4 L402.4 112.5 L404.0 112.6 L405.7 112.6 L407.4 112.7 L409.1 112.7 L410.8 112.7 L412.6 112.8 L414.4 112.8 L416.4 112.7 L418.2 112.7 L420.1 112.7 L421.9 112.7 L423.5 112.7 L425.0 112.7 L426.4 112.7 L427.7 112.8 L428.9 112.9 L430.0 112.9 L431.1 113.0 L432.1 113.1 L433.1 113.1 L434.1 113.2 L435.1 113.2 L435.9 113.2 L436.5 113.2 L436.9 113.2 L437.3 113.2 L437.7 113.2 L438.2 113.2 L439.1 113.4 L440.1 113.6 L441.4 114.0 L442.8 114.4 L444.3 114.8 L445.9 115.3 L447.5 115.8 L449.2 116.3 L450.8 116.8 L452.3 117.3 L453.9 117.8 L455.6 118.3 L457.3 118.8 L458.9 119.3 L460.6 119.8 L462.3 120.3 L464.0 120.7 L465.6 121.1 L467.2 121.4 L468.7 121.7 L470.3 122.0 L471.8 122.3 L473.3 122.5 L474.8 122.8 L476.3 123.0 L477.7 123.3 L479.0 123.5 L480.3 123.7 L481.6 123.9 L483.0 124.1 L484.6 124.3 L486.5 124.5 L488.7 124.7 L491.2 124.9 L494.0 125.1 L497.1 125.3 L500.4 125.5 L503.8 125.7 L507.3 125.9 L510.7 126.0 L514.0 126.0 L517.3 126.0 L520.6 125.9 L524.0 125.7 L527.3 125.6 L530.6 125.3 L533.8 125.0 L536.9 124.7 L539.8 124.3 L542.6 123.7 L545.3 123.1 L547.9 122.4 L550.2 121.6 L552.4 120.8 L554.4 120.1 L556.1 119.5 L557.7 118.9 L559.0 118.5 L560.1 118.1 L561.0 117.7 L561.9 117.4 L562.8 117.0 L563.7 116.6 L564.7 116.0 L565.9 115.4 L567.4 114.6 L569.0 113.6 L570.8 112.6 L572.6 111.5 L574.4 110.4 L576.3 109.3 L578.0 108.3 L579.6 107.3 L581.1 106.4 L582.6 105.5 L584.0 104.6 L585.5 103.8 L586.9 102.9 L588.3 101.9 L589.7 101.0 L591.1 99.9 L592.3 98.9 L593.4 98.0 L594.5 97.0 L595.6 96.0 L596.6 94.9 L597.6 93.8 L598.6 92.5 L599.8 91.1 L601.0 89.6 L602.3 87.9 L603.7 86.0 L605.1 84.1 L606.5 82.0 L607.9 80.0 L609.2 77.9 L610.3 75.9 L611.3 73.9 L612.3 71.9 L613.2 69.8 L614.0 67.8 L614.7 65.8 L615.3 63.8 L615.9 61.8 L616.4 59.9 L616.8 58.0 L617.0 56.2 L617.2 54.4 L617.3 52.7 L617.3 51.0 L617.3 49.4 L617.3 47.7 L617.3 45.9 L617.3 43.9 L617.2 41.7 L617.1 39.5 L616.9 37.2 L616.8 35.0 L616.6 32.9 L616.4 31.0 L616.2 29.3 L616.0 27.9 L615.8 26.7 L615.6 25.7 L615.3 24.7 L615.0 23.8 L614.7 22.9 L614.4 22.1 L614.0 21.2 L613.5 20.3 L613.0 19.3 L612.5 18.3 L611.9 17.4 L611.3 16.5 L610.7 15.5 L610.1 14.6 L609.5 13.7 L608.9 12.8 L608.2 11.9 L607.5 10.9 L606.8 9.9 L606.0 8.8 L605.2 7.8 L604.3 6.8 L603.4 5.8 L602.5 4.8 L601.6 3.9 L600.6 2.9 L599.5 2.0 L598.4 1.1 L597.3 0.2 L596.2 -0.6 L595.0 -1.3 L593.9 -1.9 L592.8 -2.4 L591.7 -2.8 L590.6 -3.2 L589.4 -3.5 L588.2 -3.8 L586.9 -4.0 L585.5 -4.2 L583.8 -4.3 L581.9 -4.5 L580.0 -4.5 L578.0 -4.6 L576.0 -4.6 L574.0 -4.7 L572.1 -4.7 L570.2 -4.8 L568.5 -4.9 L566.8 -5.0 L565.2 -5.1 L563.5 -5.3 L561.7 -5.4 L559.7 -5.5 L557.6 -5.6 L555.2 -5.7 L552.5 -5.8 L549.7 -5.9 L546.7 -6.0 L543.5 -6.1 L540.3 -6.2 L536.9 -6.2 L533.5 -6.3 L530.0 -6.3 L526.5 -6.4 L522.7 -6.4 L518.8 -6.4 L514.8 -6.4 L510.9 -6.4 L507.0 -6.4 L503.4 -6.4 L499.9 -6.3 L496.7 -6.3 L493.7 -6.2 L490.7 -6.1 L487.9 -6.0 L485.2 -5.9 L482.6 -5.7 L480.0 -5.6 L477.6 -5.3 L475.3 -5.1 L473.2 -4.8 L471.2 -4.5 L469.4 -4.1 L467.6 -3.7 L465.8 -3.3 L464.1 -2.9 L462.3 -2.5 L460.5 -2.0 L458.8 -1.5 L457.1 -1.0 L455.4 -0.4 L453.8 0.1 L452.1 0.7 L450.5 1.2 L448.8 1.8 L447.0 2.4 L445.2 3.0 L443.4 3.6 L441.5 4.2 L439.7 4.9 L437.9 5.5 L436.1 6.0 L434.3 6.6 L432.6 7.1 L430.8 7.5 L429.0 8.0 L427.2 8.5 L425.3 8.9 L423.5 9.4 L421.7 9.9 L419.8 10.4 L418.1 10.9 L416.4 11.4 L414.7 11.9 L413.0 12.4 L411.3 12.9 L409.6 13.5 L407.9 14.1 L406.2 14.8 L404.4 15.6 L402.7 16.4 L401.1 17.3 L399.5 18.2 L398.0 19.0 L396.4 19.9 L394.8 20.8 L393.2 21.6 L391.5 22.5 L389.6 23.4 L387.8 24.2 L385.9 25.1 L383.9 26.1 L382.0 27.0 L380.0 28.0 L378.2 28.9 L376.4 29.9 L374.5 30.8 L372.6 31.7 L370.6 32.7 L368.7 33.8 L366.8 34.9 L365.0 36.1 L363.4 37.5 L361.9 39.0 L360.7 40.5 L359.7 42.0 L358.8 43.6 L358.0 45.2 L357.3 46.8 L356.7 48.4 L356.0 50.1 L355.4 52.0 L354.8 54.0 L354.3 56.1 L353.8 58.2 L353.3 60.3 L353.0 62.5 L352.6 64.6 L352.3 66.7 L352.1 68.8 L351.9 70.8 L351.8 72.9 L351.7 74.9 L351.7 77.0 L351.6 79.0 L351.7 81.1 L351.8 83.1 L351.9 85.2 L352.0 87.3 L352.2 89.5 L352.5 91.7 L352.7 93.8 L353.0 95.8 L353.4 97.7 L353.7 99.5 L354.1 101.1 L354.5 102.6 L354.9 104.0 L355.4 105.3 L355.9 106.5 L356.4 107.6 L356.8 108.6 L357.3 109.7 L357.8 110.8 L358.3 111.8 L358.9 112.9 L359.5 113.8 L360.0 114.7 L360.4 115.4 L360.8 116.0 L361.1 116.4 L362.5 117.9 L364.5 118.4 L366.4 117.9 L367.9 116.5 L368.4 114.5 L367.9 112.6 L367.7 112.0 L367.3 111.4 L366.9 110.7 L366.5 109.8 L366.0 109.0 L365.6 108.1 L365.1 107.2 L364.7 106.3 L364.3 105.4 L363.9 104.4 L363.5 103.4 L363.1 102.4 L362.7 101.4 L362.4 100.3 L362.0 99.1 L361.7 97.7 L361.4 96.2 L361.1 94.5 L360.8 92.6 L360.5 90.6 L360.2 88.6 L360.0 86.6 L359.8 84.6 L359.6 82.7 L359.6 80.8 L359.5 78.9 L359.5 77.0 L359.5 75.2 L359.6 73.3 L359.7 71.4 L359.9 69.6 L360.1 67.7 L360.3 65.8 L360.6 63.8 L361.0 61.8 L361.4 59.8 L361.8 57.9 L362.3 56.1 L362.8 54.3 L363.4 52.7 L363.9 51.2 L364.5 49.7 L365.1 48.4 L365.6 47.2 L366.2 46.2 L366.9 45.2 L367.7 44.2 L368.6 43.3 L369.7 42.4 L371.0 41.5 L372.6 40.6 L374.3 39.7 L376.1 38.8 L378.0 37.9 L379.9 37.0 L381.8 36.1 L383.6 35.2 L385.5 34.3 L387.4 33.4 L389.3 32.5 L391.2 31.6 L393.1 30.7 L395.0 29.8 L396.8 29.0 L398.6 28.1 L400.3 27.2 L401.9 26.3 L403.5 25.5 L405.0 24.7 L406.5 23.9 L408.0 23.2 L409.4 22.6 L410.9 22.0 L412.5 21.4 L414.0 20.8 L415.6 20.3 L417.2 19.8 L418.8 19.3 L420.5 18.8 L422.2 18.2 L423.8 17.7 L425.6 17.3 L427.4 16.8 L429.2 16.3 L431.0 15.8 L432.9 15.3 L434.8 14.8 L436.7 14.2 L438.5 13.6 L440.4 13.0 L442.3 12.4 L444.1 11.7 L445.9 11.1 L447.7 10.4 L449.5 9.8 L451.2 9.2 L453.0 8.6 L454.6 8.0 L456.3 7.4 L457.9 6.9 L459.4 6.3 L461.0 5.8 L462.6 5.3 L464.3 4.9 L465.9 4.4 L467.6 4.0 L469.2 3.6 L470.9 3.3 L472.6 3.0 L474.3 2.7 L476.3 2.4 L478.4 2.1 L480.7 1.9 L483.0 1.7 L485.6 1.6 L488.2 1.5 L491.0 1.4 L493.9 1.3 L496.9 1.2 L500.1 1.1 L503.4 1.1 L507.1 1.1 L510.9 1.1 L514.8 1.0 L518.7 1.1 L522.6 1.1 L526.4 1.1 L530.0 1.1 L533.4 1.2 L536.8 1.2 L540.1 1.3 L543.3 1.4 L546.5 1.4 L549.4 1.5 L552.2 1.6 L554.8 1.7 L557.1 1.9 L559.2 2.1 L561.0 2.3 L562.8 2.5 L564.4 2.7 L566.1 2.9 L567.9 3.0 L569.8 3.2 L571.8 3.3 L573.8 3.4 L575.9 3.4 L577.9 3.4 L579.8 3.5 L581.5 3.5 L583.1 3.6 L584.5 3.8 L585.7 3.9 L586.8 4.1 L587.6 4.3 L588.3 4.5 L589.0 4.7 L589.6 4.9 L590.3 5.3 L591.0 5.7 L591.8 6.1 L592.6 6.7 L593.4 7.3 L594.3 8.1 L595.2 8.8 L596.0 9.6 L596.8 10.4 L597.6 11.2 L598.3 12.0 L598.9 12.8 L599.5 13.7 L600.2 14.6 L600.8 15.5 L601.4 16.4 L601.9 17.3 L602.5 18.3 L603.1 19.2 L603.6 20.0 L604.1 20.9 L604.5 21.7 L605.0 22.5 L605.3 23.2 L605.7 24.0 L606.0 24.8 L606.3 25.5 L606.6 26.2 L606.8 26.7 L607.0 27.2 L607.2 27.8 L607.4 28.5 L607.6 29.4 L607.8 30.7 L608.1 32.2 L608.4 34.0 L608.7 35.9 L609.0 38.0 L609.3 40.2 L609.6 42.3 L609.8 44.3 L609.9 46.1 L610.0 47.9 L610.0 49.5 L610.1 51.0 L610.1 52.5 L610.0 53.8 L609.8 55.2 L609.6 56.6 L609.2 58.1 L608.7 59.7 L608.1 61.3 L607.4 63.0 L606.7 64.7 L605.8 66.4 L604.9 68.2 L603.9 69.9 L602.9 71.5 L601.8 73.2 L600.5 74.9 L599.2 76.7 L597.7 78.5 L596.3 80.2 L594.8 81.9 L593.5 83.4 L592.2 84.9 L591.1 86.1 L590.2 87.2 L589.3 88.1 L588.5 88.9 L587.7 89.7 L586.9 90.5 L585.9 91.2 L584.9 92.1 L583.8 92.9 L582.7 93.6 L581.5 94.4 L580.2 95.2 L578.9 96.1 L577.4 96.9 L575.9 97.8 L574.4 98.7 L572.8 99.7 L571.1 100.8 L569.3 101.9 L567.5 102.9 L565.7 104.0 L564.0 105.0 L562.5 105.9 L561.1 106.6 L560.0 107.2 L559.2 107.6 L558.6 107.9 L558.0 108.1 L557.5 108.4 L556.7 108.6 L555.7 109.0 L554.3 109.5 L552.6 110.1 L550.8 110.9 L548.9 111.6 L547.0 112.4 L544.9 113.1 L542.7 113.8 L540.5 114.4 L538.2 114.9 L535.6 115.4 L532.8 115.7 L529.8 116.1 L526.7 116.4 L523.5 116.6 L520.3 116.8 L517.1 116.9 L514.0 117.0 L510.8 117.0 L507.6 117.0 L504.3 116.8 L500.9 116.7 L497.7 116.5 L494.7 116.3 L491.8 116.1 L489.3 115.9 L487.3 115.8 L485.5 115.6 L484.1 115.5 L482.8 115.3 L481.6 115.2 L480.4 115.0 L479.1 114.8 L477.7 114.6 L476.2 114.3 L474.7 114.1 L473.3 113.8 L471.9 113.6 L470.4 113.3 L469.0 113.0 L467.5 112.7 L466.0 112.3 L464.5 111.9 L463.0 111.5 L461.4 111.0 L459.7 110.6 L458.1 110.1 L456.5 109.6 L454.8 109.1 L453.2 108.6 L451.6 108.1 L450.0 107.6 L448.4 107.1 L446.8 106.6 L445.2 106.2 L443.7 105.7 L442.3 105.3 L440.9 105.0 L439.8 104.8 L438.8 104.6 L437.8 104.5 L437.0 104.4 L436.3 104.4 L435.8 104.4 L435.2 104.4 L434.5 104.4 L433.6 104.4 L432.6 104.3 L431.5 104.3 L430.4 104.3 L429.1 104.3 L427.8 104.3 L426.5 104.3 L425.0 104.3 L423.4 104.3 L421.7 104.4 L419.8 104.5 L418.0 104.6 L416.1 104.7 L414.3 104.8 L412.5 104.8 L410.8 104.9 L409.2 104.8 L407.6 104.8 L405.9 104.8 L404.4 104.7 L402.8 104.6 L401.2 104.5 L399.7 104.5 L398.3 104.4 L396.8 104.3 L395.4 104.2 L394.0 104.0 L392.6 103.9 L391.3 103.8 L390.0 103.7 L388.8 103.5 L387.7 103.4 L386.7 103.2 L385.9 103.1 L385.0 102.9 L384.3 102.8 L383.5 102.6 L382.7 102.4 L381.9 102.2 L381.0 101.9 L380.1 101.7 L379.0 101.3 L377.8 101.0 L376.7 100.6 L375.5 100.2 L374.5 99.9 L373.7 99.6 L373.0 99.4 L370.9 99.3 L369.0 100.3 L367.9 102.1 L367.8 104.2 L368.8 106.1Z"/>
</g></svg>
</body>
</html>
